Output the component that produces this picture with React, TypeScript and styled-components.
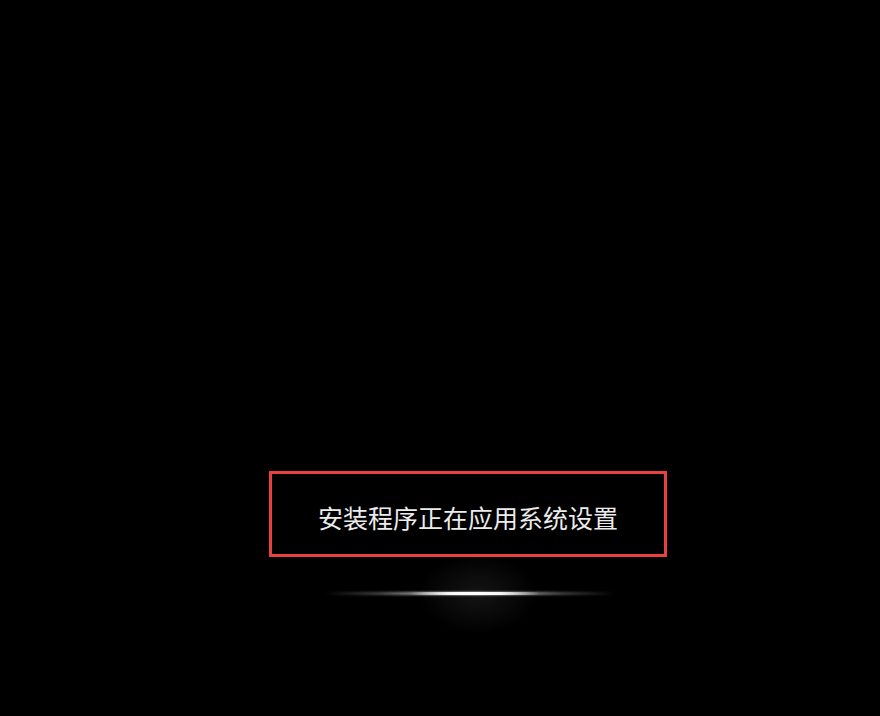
import React from 'react';
import styled, { createGlobalStyle } from 'styled-components';

const GlobalStyle = createGlobalStyle`
  html, body {
    margin: 0;
    padding: 0;
    background: #000;
  }
`;

const Screen = styled.div`
  width: 880px;
  height: 716px;
  background: #000;
  display: flex;
  flex-direction: column;
  padding: 471px 0 0 269px;
  box-sizing: border-box;
  font-family: 'Microsoft YaHei', 'Noto Sans CJK SC', sans-serif;
`;

const MessageBox = styled.div`
  width: 398px;
  height: 86px;
  box-sizing: border-box;
  border: 3px solid #e8413f;
  display: flex;
  align-items: center;
  justify-content: center;
`;

const Message = styled.span`
  color: #ececec;
  font-size: 25px;
  line-height: 1;
  margin-top: 6px;
`;

const GlowWrap = styled.div`
  position: relative;
  width: 290px;
  height: 80px;
  margin: -3px 0 0 56px;
`;

const Halo = styled.div`
  position: absolute;
  left: 93px;
  top: 0;
  width: 120px;
  height: 80px;
  background: radial-gradient(ellipse at center, rgba(255, 255, 255, 0.08) 0%, rgba(255, 255, 255, 0.035) 40%, rgba(255, 255, 255, 0) 70%);
`;

const Line = styled.div`
  position: absolute;
  left: 0;
  top: 38px;
  width: 290px;
  height: 3px;
  background: linear-gradient(
    to right,
    rgba(255, 255, 255, 0) 0%,
    rgba(255, 255, 255, 0.25) 18%,
    rgba(255, 255, 255, 0.7) 36%,
    rgba(255, 255, 255, 0.95) 50%,
    rgba(255, 255, 255, 0.7) 64%,
    rgba(255, 255, 255, 0.25) 82%,
    rgba(255, 255, 255, 0) 100%
  );
  filter: blur(0.8px);
`;

const Core = styled.div`
  position: absolute;
  left: 85px;
  top: 38px;
  width: 130px;
  height: 3px;
  background: linear-gradient(
    to right,
    rgba(255, 255, 255, 0) 0%,
    rgba(255, 255, 255, 0.9) 30%,
    #fff 50%,
    rgba(255, 255, 255, 0.9) 70%,
    rgba(255, 255, 255, 0) 100%
  );
  filter: blur(0.5px);
`;

export default function App() {
  return (
    <>
      <GlobalStyle />
      <Screen>
        <MessageBox>
          <Message>安装程序正在应用系统设置</Message>
        </MessageBox>
        <GlowWrap>
          <Halo />
          <Line />
          <Core />
        </GlowWrap>
      </Screen>
    </>
  );
}
